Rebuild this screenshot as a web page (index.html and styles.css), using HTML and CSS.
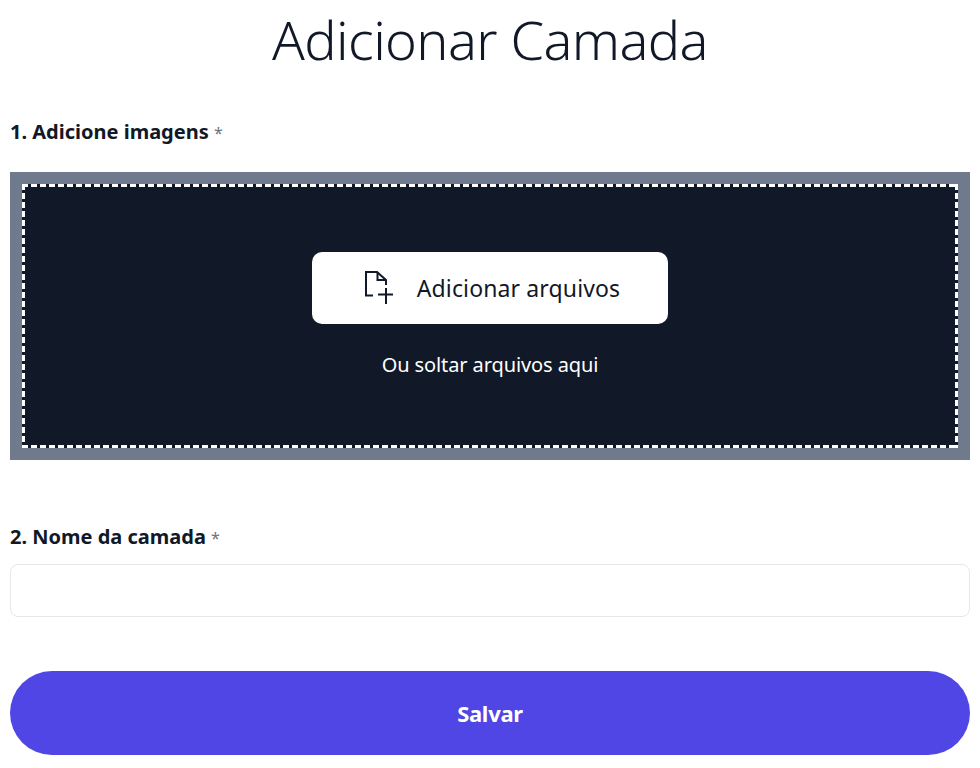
FILE: index.html
```html
<!DOCTYPE html>
<html lang="pt-BR">
<head>
    <meta charset="UTF-8">
    <meta name="viewport" content="width=device-width, initial-scale=1.0">
    <title>Adicionar Camada</title>
    <link rel="stylesheet" href="styles.css">
</head>
<body>
    <form class="container">
        <h1>Adicionar Camada</h1>

        <!-- Upload -->
        <label class="field-label upload-label">1. Adicione imagens <span class="required">*</span></label>
        <div class="dropzone">
            <div class="dropzone-inner">
                <button type="button" class="add-files">
                    <svg class="add-icon" width="36" height="36" viewBox="0 0 36 36" fill="none" stroke="#111827" stroke-width="2">
                        <path d="M13 25.5H6V2H17L26 10V15"/>
                        <path d="M17.5 2V10H26"/>
                        <path d="M26 18V34M18 24.5H33"/>
                    </svg>
                    Adicionar arquivos
                </button>
                <p class="drop-text">Ou soltar arquivos aqui</p>
            </div>
        </div>

        <!-- Name -->
        <label class="field-label name-label" for="layer-name">2. Nome da camada <span class="required">*</span></label>
        <input id="layer-name" class="text-input" type="text">

        <button type="button" class="save">Salvar</button>
    </form>
</body>
</html>
```

FILE: styles.css
```css
/* General Styles */
html, body {
    margin: 0;
    padding: 0;
    background-color: #fff;
}
body {
    font-family: "Noto Sans", sans-serif;
    color: #111827;
}
.container {
    display: flex;
    flex-direction: column;
    padding: 0 10px;
}
h1 {
    margin: 0;
    height: 84px;
    font-size: 54px;
    line-height: 78px;
    font-weight: 300;
    letter-spacing: -0.6px;
    text-align: center;
}

/* Labels */
.field-label {
    font-size: 20px;
    line-height: 28px;
    font-weight: 700;
}
.upload-label {
    margin-top: 34px;
    margin-bottom: 25px;
}
.name-label {
    margin-top: 63px;
    margin-bottom: 12px;
}
.required {
    font-size: 16px;
    font-weight: 400;
    color: #6b7280;
}

/* Dropzone */
.dropzone {
    box-sizing: border-box;
    height: 288px;
    border: 12px solid #6f7b8d;
    background-color: #111827;
}
/* 6px on, 3px off: a dashed border would come out with a longer gap */
.dropzone-inner {
    box-sizing: border-box;
    height: 100%;
    padding: 3px;
    display: flex;
    flex-direction: column;
    align-items: center;
    justify-content: center;
    background-image:
        linear-gradient(to right, #fff 6px, transparent 6px),
        linear-gradient(to right, #fff 6px, transparent 6px),
        linear-gradient(to bottom, #fff 6px, transparent 6px),
        linear-gradient(to bottom, #fff 6px, transparent 6px);
    background-size: 9px 3px, 9px 3px, 3px 9px, 3px 9px;
    background-position: left top, left bottom, left top, right top;
    background-repeat: repeat-x, repeat-x, repeat-y, repeat-y;
}
.add-files {
    width: 356px;
    height: 72px;
    padding: 0;
    display: flex;
    align-items: center;
    justify-content: center;
    gap: 21px;
    background-color: #fff;
    color: #111827;
    border: none;
    border-radius: 10px;
    font-family: inherit;
    font-size: 23px;
    letter-spacing: 0.13px;
    cursor: pointer;
}
.add-icon {
    flex-shrink: 0;
}
.drop-text {
    margin: 26px 0 0;
    color: #fff;
    font-size: 20px;
    line-height: 30px;
    letter-spacing: -0.1px;
}

/* Name input */
.text-input {
    box-sizing: border-box;
    height: 53px;
    border: 1px solid #e5e7eb;
    border-radius: 8px;
    background-color: #fff;
}

/* Save button */
.save {
    height: 84px;
    margin-top: 54px;
    border: none;
    border-radius: 42px;
    background-color: #4f46e5;
    color: #fff;
    font-family: inherit;
    font-size: 22px;
    font-weight: 700;
    letter-spacing: -0.3px;
    cursor: pointer;
}
```
